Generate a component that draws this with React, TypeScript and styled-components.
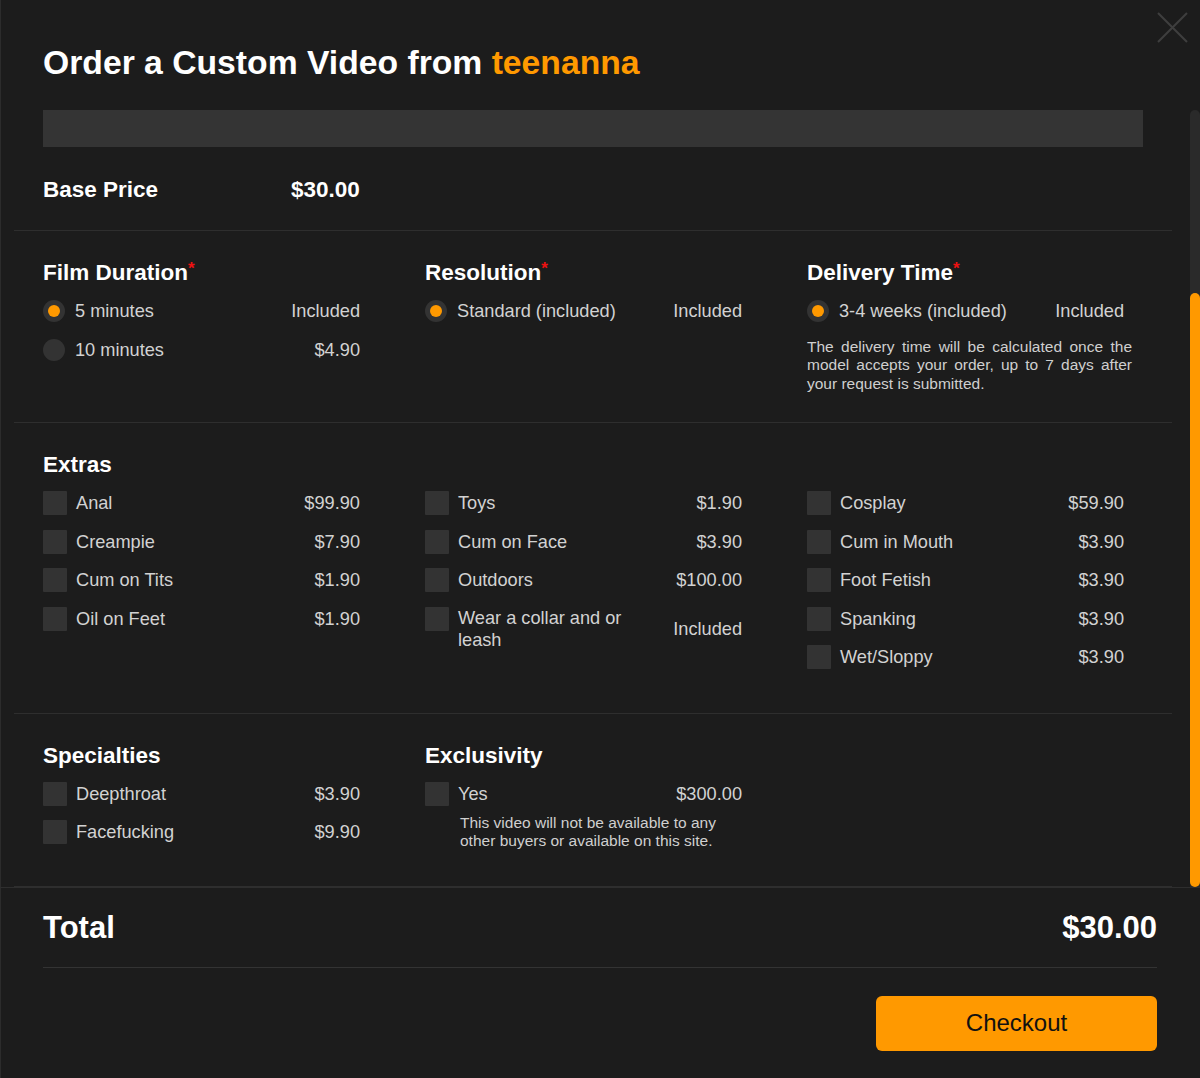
import React from 'react';
import styled, { createGlobalStyle } from 'styled-components';

const GlobalStyle = createGlobalStyle`
  html, body {
    margin: 0;
    padding: 0;
    background: #1c1c1c;
  }
  * {
    box-sizing: border-box;
  }
`;

const ORANGE = '#ff9900';

const Modal = styled.div`
  position: relative;
  width: 1200px;
  min-height: 1078px;
  background: #1c1c1c;
  box-shadow: inset 1px 0 0 #2c2c2c;
  font-family: "Liberation Sans", Arial, sans-serif;
  color: #d2d2d2;
`;

const CloseButton = styled.button`
  position: absolute;
  top: 12px;
  right: 12px;
  width: 31px;
  height: 31px;
  padding: 0;
  border: 0;
  background: none;
  cursor: pointer;
`;

const Header = styled.div`
  padding: 42px 43px 28px;
`;

const Title = styled.h1`
  margin: 0;
  font-size: 33.7px;
  line-height: 40px;
  font-weight: 700;
  color: #fff;
`;

const Accent = styled.span`
  color: ${ORANGE};
`;

const Body = styled.div`
  display: flex;
`;

const Content = styled.div`
  flex: 1;
  padding: 0 14px;
`;

const Scrollbar = styled.div`
  width: 14px;
  padding-left: 4px;
  display: flex;
`;

const Track = styled.div`
  flex: 1;
  display: flex;
  flex-direction: column;
  background: #2a2a2a;
  border-radius: 5px 5px 0 0;
`;

const Thumb = styled.div`
  flex: 1;
  margin-top: 183px;
  background: ${ORANGE};
  border-radius: 5px;
`;

const Section = styled.section<{ $top?: number; $bottom?: number }>`
  padding: ${p => p.$top ?? 29}px 29px ${p => p.$bottom ?? 29}px;
  border-bottom: 1px solid #2e2e2e;
`;

const PreviewBar = styled.div`
  height: 37px;
  background: #343434;
`;

const BaseRow = styled.div`
  display: grid;
  grid-template-columns: 248px auto;
  margin-top: 30px;
  font-size: 22.5px;
  line-height: 26px;
  font-weight: 700;
  color: #fff;
`;

const Grid = styled.div`
  display: grid;
  grid-template-columns: repeat(3, 317px);
  column-gap: 65px;
  align-items: start;
`;

const Heading = styled.h3`
  margin: 0 0 13px;
  font-size: 22.5px;
  line-height: 26px;
  font-weight: 700;
  color: #fff;
`;

const Req = styled.span`
  color: #ee1111;
  font-size: 17px;
  vertical-align: top;
  line-height: 18px;
`;

const Row = styled.label<{ $box: number; $gap: number }>`
  display: grid;
  grid-template-columns: ${p => p.$box}px 1fr auto;
  column-gap: ${p => p.$gap}px;
  align-items: center;
  min-height: 24px;
  margin-bottom: 14.5px;
  font-size: 18.2px;
  line-height: 22px;
  color: #d2d2d2;
  cursor: pointer;
`;

const Label = styled.span`
  padding-right: 20px;
`;

const Price = styled.span`
  text-align: right;
  white-space: nowrap;
`;

const Box = styled.span`
  align-self: start;
  width: 24px;
  height: 24px;
  background: #333;
  border-radius: 1px;
`;

const Radio = styled.span<{ $on?: boolean }>`
  align-self: start;
  margin-top: 1px;
  width: 22px;
  height: 22px;
  border-radius: 50%;
  background: #333;
  display: flex;
  align-items: center;
  justify-content: center;

  &::after {
    content: '';
    width: 12px;
    height: 12px;
    border-radius: 50%;
    background: ${p => (p.$on ? ORANGE : 'transparent')};
  }
`;

const Note = styled.p<{ $indent?: number; $width: number; $justify?: boolean }>`
  margin: ${p => (p.$indent ? '-6px' : '0')} 0 0 ${p => p.$indent ?? 0}px;
  width: ${p => p.$width}px;
  font-size: 15.5px;
  line-height: ${p => (p.$justify ? 18.5 : 18)}px;
  color: #cfcfcf;
  text-align: ${p => (p.$justify ? 'justify' : 'left')};
`;

const Footer = styled.div`
  border-top: 1px solid #2e2e2e;
  padding: 0 43px 28px;
`;

const TotalRow = styled.div`
  display: flex;
  justify-content: space-between;
  align-items: center;
  padding: 22px 0 21px;
  border-bottom: 1px solid #333;
  font-size: 31px;
  line-height: 36px;
  font-weight: 700;
  color: #fff;
`;

const Actions = styled.div`
  display: flex;
  justify-content: flex-end;
  margin-top: 28px;
`;

const CheckoutButton = styled.button`
  width: 281px;
  height: 55px;
  border: 0;
  border-radius: 6px;
  background: ${ORANGE};
  color: #111;
  font-family: "Liberation Sans", Arial, sans-serif;
  font-size: 24px;
  cursor: pointer;
`;

type Item = { name: string; price: string };

const extras: Item[][] = [
  [
    { name: 'Anal', price: '$99.90' },
    { name: 'Creampie', price: '$7.90' },
    { name: 'Cum on Tits', price: '$1.90' },
    { name: 'Oil on Feet', price: '$1.90' },
  ],
  [
    { name: 'Toys', price: '$1.90' },
    { name: 'Cum on Face', price: '$3.90' },
    { name: 'Outdoors', price: '$100.00' },
    { name: 'Wear a collar and or leash', price: 'Included' },
  ],
  [
    { name: 'Cosplay', price: '$59.90' },
    { name: 'Cum in Mouth', price: '$3.90' },
    { name: 'Foot Fetish', price: '$3.90' },
    { name: 'Spanking', price: '$3.90' },
    { name: 'Wet/Sloppy', price: '$3.90' },
  ],
];

const specialties: Item[] = [
  { name: 'Deepthroat', price: '$3.90' },
  { name: 'Facefucking', price: '$9.90' },
];

const CheckRow: React.FC<{ item: Item }> = ({ item }) => (
  <Row $box={24} $gap={9}>
    <Box />
    <Label>{item.name}</Label>
    <Price>{item.price}</Price>
  </Row>
);

const RadioRow: React.FC<{ item: Item; on?: boolean }> = ({ item, on }) => (
  <Row $box={22} $gap={10}>
    <Radio $on={on} />
    <Label>{item.name}</Label>
    <Price>{item.price}</Price>
  </Row>
);

const App: React.FC = () => {
  return (
    <>
      <GlobalStyle />
      <Modal>
        <CloseButton aria-label="close">
          <svg width="31" height="31" viewBox="0 0 31 31">
            <path d="M1 1 L30 30 M30 1 L1 30" stroke="#3e3e3e" strokeWidth="2" />
          </svg>
        </CloseButton>
        <Header>
          <Title>
            Order a Custom Video from <Accent>teenanna</Accent>
          </Title>
        </Header>
        <Body>
          <Content>
            <Section $top={0} $bottom={27}>
              <PreviewBar />
              <BaseRow>
                <span>Base Price</span>
                <span>$30.00</span>
              </BaseRow>
            </Section>

            <Section>
              <Grid>
                <div>
                  <Heading>Film Duration<Req>*</Req></Heading>
                  <RadioRow item={{ name: '5 minutes', price: 'Included' }} on />
                  <RadioRow item={{ name: '10 minutes', price: '$4.90' }} />
                </div>
                <div>
                  <Heading>Resolution<Req>*</Req></Heading>
                  <RadioRow item={{ name: 'Standard (included)', price: 'Included' }} on />
                </div>
                <div>
                  <Heading>Delivery Time<Req>*</Req></Heading>
                  <RadioRow item={{ name: '3-4 weeks (included)', price: 'Included' }} on />
                  <Note $width={325} $justify>
                    The delivery time will be calculated once the model accepts your order, up to 7 days
                    after your request is submitted.
                  </Note>
                </div>
              </Grid>
            </Section>

            <Section>
              <Heading>Extras</Heading>
              <Grid>
                {extras.map((col, i) => (
                  <div key={i}>
                    {col.map(item => (
                      <CheckRow key={item.name} item={item} />
                    ))}
                  </div>
                ))}
              </Grid>
            </Section>

            <Section $bottom={27}>
              <Grid>
                <div>
                  <Heading>Specialties</Heading>
                  {specialties.map(item => (
                    <CheckRow key={item.name} item={item} />
                  ))}
                </div>
                <div>
                  <Heading>Exclusivity</Heading>
                  <CheckRow item={{ name: 'Yes', price: '$300.00' }} />
                  <Note $indent={35} $width={270}>
                    This video will not be available to any other buyers or available on this site.
                  </Note>
                </div>
              </Grid>
            </Section>
          </Content>
          <Scrollbar>
            <Track>
              <Thumb />
            </Track>
          </Scrollbar>
        </Body>
        <Footer>
          <TotalRow>
            <span>Total</span>
            <span>$30.00</span>
          </TotalRow>
          <Actions>
            <CheckoutButton>Checkout</CheckoutButton>
          </Actions>
        </Footer>
      </Modal>
    </>
  );
};

export default App;
